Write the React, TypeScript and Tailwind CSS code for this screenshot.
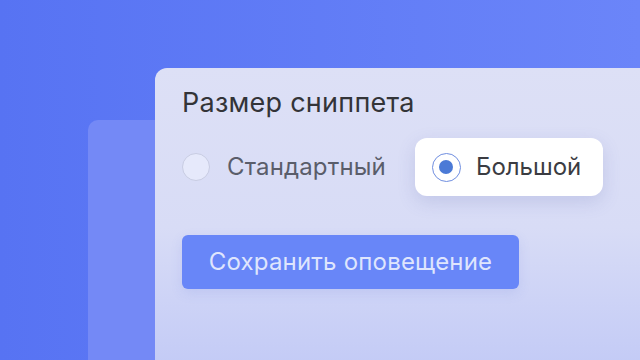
import React from "react";

export default function App() {
  return (
    <div
      className="relative w-[640px] h-[360px] overflow-hidden bg-gradient-to-r from-[#5773f3] to-[#6b85f9]"
      style={{ fontFamily: "Inter, 'Noto Sans', sans-serif" }}
    >
      {/* back card */}
      <div className="absolute left-[88px] top-[120px] w-[600px] h-[300px] rounded-[10px] bg-[#7489f6]" />
      {/* front card */}
      <div className="relative ml-[155px] mt-[68px] h-[320px] rounded-tl-[12px] bg-gradient-to-b from-[#dde0f6] via-[#d8dcf6] to-[#c0c8f6] pl-[27px] pt-[17px]">
        <div className="text-[27px] leading-[36px] text-[#333438] tracking-[0.25px]">Размер сниппета</div>
        <div className="flex items-center mt-[17px] h-[58px]">
          <div className="w-[28px] h-[28px] shrink-0 rounded-full border border-[#c8cce2] bg-[#e6e9fb]" />
          <div className="ml-[17px] text-[24px] text-[#5a5d6a] tracking-[0.15px] whitespace-nowrap">Стандартный</div>
          <div className="ml-[29px] flex items-center shrink-0 w-[188px] h-[58px] rounded-[12px] bg-white shadow-[0_6px_18px_rgba(90,100,170,0.18)] pl-[17px]">
            <div className="w-[29px] h-[29px] shrink-0 rounded-full border border-[#6f8ee0] flex items-center justify-center">
              <div className="w-[14px] h-[14px] rounded-full bg-[#4b7ad6]" />
            </div>
            <div className="ml-[15px] text-[24px] text-[#3b3c42] tracking-[0px] whitespace-nowrap">Большой</div>
          </div>
        </div>
        <div className="mt-[39px] w-[337px] h-[54px] rounded-[6px] bg-[#6886f8] flex items-center justify-center text-[24px] text-[#dfe5fd] tracking-[0.2px] whitespace-nowrap shadow-[0_4px_12px_rgba(100,120,220,0.15)]">
          Сохранить оповещение
        </div>
      </div>
    </div>
  );
}
